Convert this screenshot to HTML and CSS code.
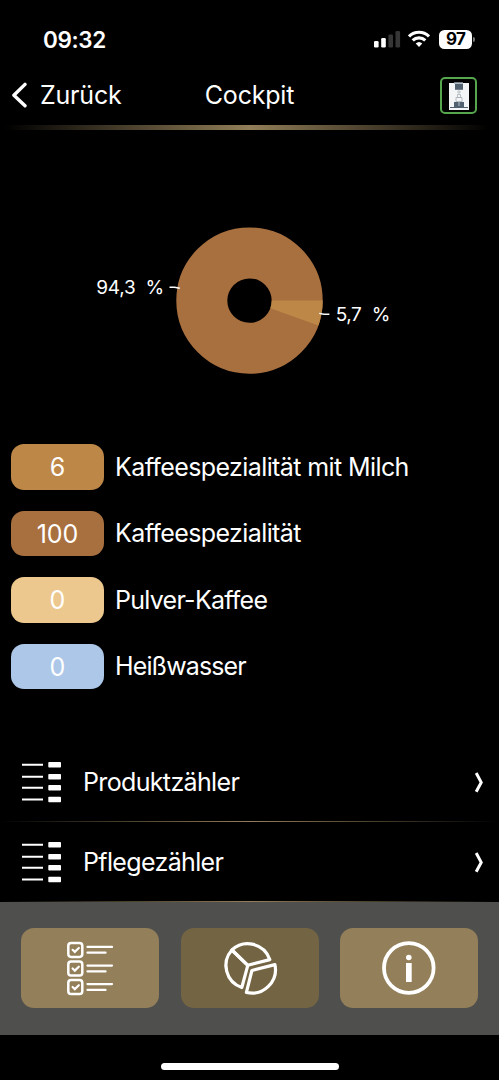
FILE: index.html
```html
<!DOCTYPE html>
<html lang="de">
<head>
<meta charset="utf-8">
<title>Cockpit</title>
<link rel="stylesheet" href="styles.css">
</head>
<body>
<div class="app">
  <div class="status">
    <span class="time">09:32</span>
    <div class="status-icons">
      <svg class="signal" width="27" height="18" viewBox="0 0 27 18">
        <rect x="0" y="11" width="4.6" height="6.6" rx="1.3" fill="#fff"/>
        <rect x="7.2" y="8" width="4.6" height="9.6" rx="1.3" fill="#fff"/>
        <rect x="14.4" y="4.4" width="4.6" height="13.2" rx="1.3" fill="#363636"/>
        <rect x="21.5" y="1" width="4.6" height="16.6" rx="1.3" fill="#363636"/>
      </svg>
      <svg class="wifi" width="22" height="18" viewBox="0 0 22 18">
        <g fill="none" stroke="#fff" stroke-width="3.1">
          <path d="M1 6.4a14.3 14.3 0 0 1 20 0"/>
          <path d="M4.7 10.4a9 9 0 0 1 12.6 0"/>
        </g>
        <path d="M7.7 13.6a4.8 4.8 0 0 1 6.6 0L11 17z" fill="#fff"/>
      </svg>
      <div class="battery">97</div><div class="battery-cap"></div>
    </div>
  </div>
  <header class="header">
    <div class="back">
      <svg width="16" height="26" viewBox="0 0 16 26"><path d="M14 2.4 2.9 13.3 14 23.8" fill="none" stroke="#fff" stroke-width="3.4" stroke-linecap="round" stroke-linejoin="round"/></svg>
      <span class="back-label">Zurück</span>
    </div>
    <h1 class="title">Cockpit</h1>
    <div class="machine">
      <svg width="20" height="28" viewBox="0 0 20 28">
        <path fill="#f3f5f6" d="M0 1h20v27H0z"/>
        <path fill="#73818d" d="M5 0h9v1.5H5z"/>
        <path fill="#526170" d="M6 2h8v5.8H6z"/>
        <g fill="none" stroke="#a7b0b7" stroke-width=".8"><circle cx="10" cy="10" r="1.2"/><path d="M8.5 12.5h3v3h-3zM7 15.5h6v4H7z"/></g>
        <path fill="#526170" d="M5 20h10v5H5zM1 25h18v1H1z"/>
        <path fill="#9ba7b0" d="M9.3 20h1.4v4H9.3z"/>
      </svg>
    </div>
  </header>
  <div class="header-rule"></div>
  <main class="content">
    <svg class="chart" width="499" height="314" viewBox="0 130 499 314">
      <circle cx="249.5" cy="300.6" r="47.7" fill="none" stroke="#a9703f" stroke-width="51"/>
      <path d="M271.7 300.6H322.7A73.2 73.2 0 0 1 318.4 325.5L270.4 308.2A22.2 22.2 0 0 0 271.7 300.6Z" fill="#bd8748"/>
      <path d="M169.5 287.2l5 .1 5.3 1M319.2 313.4l4.7.8h5.5" fill="none" stroke="#fff" stroke-width="1.4"/>
      <text class="chart-label" y="294.2"><tspan x="96.2" textLength="39.5">94,3</tspan><tspan x="145.5" textLength="17">%</tspan></text>
      <text class="chart-label" y="321.2"><tspan x="335.8" textLength="26">5,7</tspan><tspan x="371.7" textLength="17">%</tspan></text>
    </svg>
    <ul class="legend">
      <li class="legend-row"><span class="pill milk">6</span><span class="l1">Kaffeespezialität mit Milch</span></li>
      <li class="legend-row"><span class="pill coffee">100</span><span class="l2">Kaffeespezialität</span></li>
      <li class="legend-row"><span class="pill powder">0</span><span class="l3">Pulver-Kaffee</span></li>
      <li class="legend-row"><span class="pill water">0</span><span class="l4">Heißwasser</span></li>
    </ul>
    <nav class="counters">
      <div class="counter">
        <svg width="40" height="42" viewBox="0 0 40 42"><g fill="#fff"><path d="M0 2.7h21v2H0zM0 14.7h21v2H0zM0 25.7h21v2H0zM0 37.5h21v2H0z"/><rect x="26.3" y="1" width="12.7" height="5.5" rx=".8"/><rect x="26.3" y="13" width="12.7" height="5.5" rx=".8"/><rect x="26.3" y="24" width="12.7" height="5.5" rx=".8"/><rect x="26.3" y="35.7" width="12.7" height="5.5" rx=".8"/></g></svg>
        <span class="counter-label c1">Produktzähler</span>
        <svg width="12" height="22" viewBox="0 0 12 22"><path d="M2.2 2 7.2 11.4 2.2 20.8" fill="none" stroke="#fff" stroke-width="3"/></svg>
      </div>
      <div class="row-rule"></div>
      <div class="counter">
        <svg width="40" height="42" viewBox="0 0 40 42"><g fill="#fff"><path d="M0 2.7h21v2H0zM0 14.7h21v2H0zM0 25.7h21v2H0zM0 37.5h21v2H0z"/><rect x="26.3" y="1" width="12.7" height="5.5" rx=".8"/><rect x="26.3" y="13" width="12.7" height="5.5" rx=".8"/><rect x="26.3" y="24" width="12.7" height="5.5" rx=".8"/><rect x="26.3" y="35.7" width="12.7" height="5.5" rx=".8"/></g></svg>
        <span class="counter-label c2">Pflegezähler</span>
        <svg width="12" height="22" viewBox="0 0 12 22"><path d="M2.2 2 7.2 11.4 2.2 20.8" fill="none" stroke="#fff" stroke-width="3"/></svg>
      </div>
      <div class="row-rule"></div>
    </nav>
  </main>
  <nav class="tabs">
    <div class="tab">
      <svg width="138" height="80" viewBox="21 928 138 80">
        <defs><g id="check"><rect x="68.3" y="942.9" width="14" height="14" rx="2.8" stroke-width="2.5"/><path d="m72.6 949.8 2.2 2.1 4-3.9" stroke-width="2.2"/><path d="M87.5 946.9h24.5M87.5 952.7h18" stroke-width="2.3"/></g></defs>
        <g fill="none" stroke="#fff" stroke-linecap="round"><use href="#check"/><use href="#check" y="18.7"/><use href="#check" y="37.2"/></g>
      </svg>
    </div>
    <div class="tab active">
      <svg width="138" height="80" viewBox="180.5 928 138 80">
        <g fill="none" stroke="#fff" stroke-width="3.2" stroke-linejoin="round">
          <path d="M231.4 950A23.2 23.2 0 0 0 241.3 987.5L247.3 965.3Z"/>
          <path d="M231.4 950A23.2 23.2 0 0 1 269.3 959.6L247.3 965.3Z"/>
          <path d="M251.4 970.5 274.4 964.6A23.5 23.5 0 0 1 245.9 992.4Z"/>
        </g>
      </svg>
    </div>
    <div class="tab">
      <svg width="138" height="80" viewBox="340 928 138 80"><circle cx="408.8" cy="968" r="24.8" fill="none" stroke="#fff" stroke-width="3.8"/><circle cx="408.8" cy="957.5" r="2.8" fill="#fff"/><path d="M406 963h5.7v19H406z" fill="#fff"/></svg>
    </div>
  </nav>
  <div class="home"><div class="home-bar"></div></div>
</div>
</body>
</html>
```
FILE: styles.css
```css
* { box-sizing: border-box; }
body { margin: 0; background: #000; color: #fff; font-family: Inter, "Liberation Sans", sans-serif; font-size: 25px; line-height: 30px; }
svg { display: block; flex: none; }
.app { width: 499px; height: 1080px; display: flex; flex-direction: column; overflow: hidden; white-space: nowrap; }
.status { height: 76px; padding: 0 24px 0 43px; display: flex; justify-content: space-between; align-items: flex-start; }
.time { margin-top: 25px; font-size: 22.5px; font-weight: 600; letter-spacing: -0.35px; }
.status-icons { display: flex; align-items: flex-start; margin-top: 30px; }
.wifi { margin-left: 7px; }
.battery { width: 33px; height: 19px; margin-left: 9px; border-radius: 5.5px; background: #fff; color: #000; font-size: 17px; line-height: 19px; font-weight: 700; text-align: center; letter-spacing: -0.8px; }
.battery-cap { width: 2px; height: 5px; margin: 7px 0 0 1px; border-radius: 0 2px 2px 0; background: #777; }
.header { height: 49px; padding: 0 22px 0 11px; display: grid; grid-template-columns: 1fr auto 1fr; align-items: start; }
.back { display: flex; margin-top: 6px; }
.back-label { margin: -2px 0 0 13px; letter-spacing: -0.2px; }
.title { margin: 4px 0 0 11px; font: inherit; letter-spacing: -0.2px; }
.machine { justify-self: end; width: 37px; height: 37px; margin-top: 1px; border: 2px solid #56a64d; border-radius: 5px; display: flex; align-items: center; justify-content: center; }
.header-rule { height: 5px; background: linear-gradient(90deg, #000 1%, #927e58 50%, #000 98%); }
.chart-label { font-size: 19px; fill: #fff; }
.legend { margin: 0; padding: 0.3px 11px 0; height: 311px; list-style: none; display: flex; flex-direction: column; gap: 21.1px; }
.legend-row { display: flex; align-items: center; gap: 11px; height: 45.4px; }
.pill { width: 93px; height: 45.4px; border-radius: 13px; line-height: 46.4px; text-align: center; }
.milk { background: #bd8748; }
.coffee { background: #a9703f; }
.powder { background: #ecc88e; }
.water { background: #acc7e7; }
.l1, .l2 { letter-spacing: -0.6px; }
.l3 { letter-spacing: -0.73px; }
.l4 { letter-spacing: -0.87px; }
.counters { display: flex; flex-direction: column; height: 147px; }
.counter { height: 66px; flex: none; padding: 0 13px 0 22px; display: flex; align-items: flex-start; }
.counter > svg { margin-top: 6px; }
.counter > svg:last-child { margin: 16px 0 0 auto; }
.counter-label { margin: 12px 0 0 21px; }
.c1 { letter-spacing: -0.65px; }
.c2 { letter-spacing: -0.65px; }
.row-rule { height: 1px; flex: none; background: linear-gradient(90deg, #000, #927e58 50%, #000); }
.row-rule + .counter { margin-top: 13px; }
.tabs { height: 133px; padding: 26px 21px 27px; background: #4f4f4d; display: flex; justify-content: space-between; }
.tab { width: 138px; height: 80px; border-radius: 13px; background: #937f5a; }
.active { background: #736443; }
.home { flex: 1; display: flex; justify-content: center; padding-top: 27.5px; }
.home-bar { width: 178px; height: 7px; border-radius: 4px; background: #fff; }
```
